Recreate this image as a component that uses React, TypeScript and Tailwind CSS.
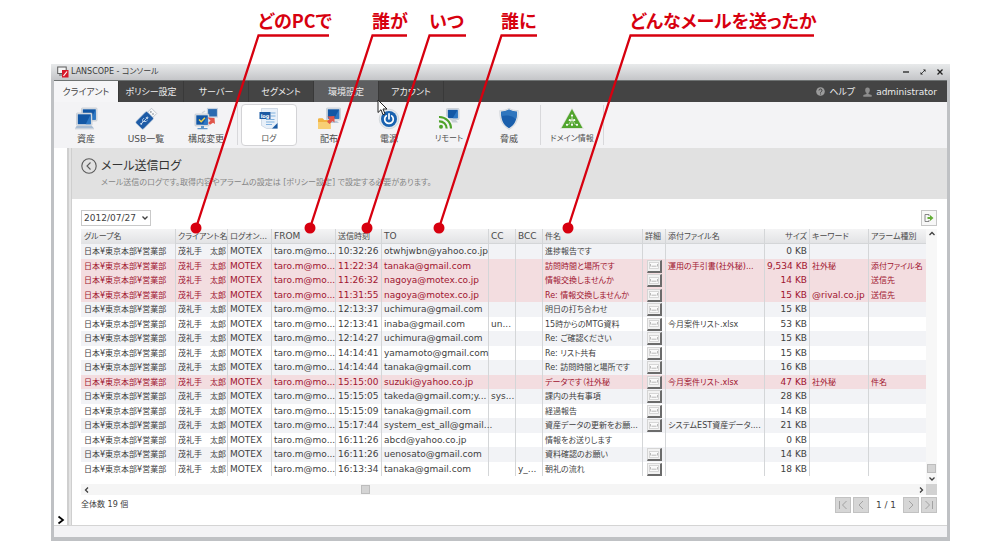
import React from "react";

type Row = {
  time: string;
  to: string;
  cc?: string;
  bcc?: string;
  subject: string;
  mail?: boolean;
  file?: string;
  size: string;
  keyword?: string;
  alarm?: string;
};

const rows: Row[] = [
  { time: "10:32:26", to: "otwhjwbn@yahoo.co.jp", subject: "進捗報告です", size: "0 KB" },
  { time: "11:22:34", to: "tanaka@gmail.com", subject: "訪問時間と場所です", mail: true, file: "運用の手引書(社外秘)...", size: "9,534 KB", keyword: "社外秘", alarm: "添付ファイル名" },
  { time: "11:26:32", to: "nagoya@motex.co.jp", subject: "情報交換しませんか", mail: true, size: "14 KB", alarm: "送信先" },
  { time: "11:31:55", to: "nagoya@motex.co.jp", subject: "Re: 情報交換しませんか", mail: true, size: "15 KB", keyword: "@rival.co.jp", alarm: "送信先" },
  { time: "12:13:37", to: "uchimura@gmail.com", subject: "明日の打ち合わせ", mail: true, size: "15 KB" },
  { time: "12:13:41", to: "inaba@gmail.com", cc: "un...", subject: "15時からのMTG資料", mail: true, file: "今月案件リスト.xlsx", size: "53 KB" },
  { time: "12:14:27", to: "uchimura@gmail.com", subject: "Re: ご確認ください", mail: true, size: "15 KB" },
  { time: "14:14:41", to: "yamamoto@gmail.com", subject: "Re: リスト共有", mail: true, size: "15 KB" },
  { time: "14:14:44", to: "tanaka@gmail.com", subject: "Re: 訪問時間と場所です", mail: true, size: "16 KB" },
  { time: "15:15:00", to: "suzuki@yahoo.co.jp", subject: "データです（社外秘", mail: true, file: "今月案件リスト.xlsx", size: "47 KB", keyword: "社外秘", alarm: "件名" },
  { time: "15:15:05", to: "takeda@gmail.com;y...", cc: "sys...", subject: "課内の共有事項", mail: true, size: "28 KB" },
  { time: "15:15:09", to: "tanaka@gmail.com", subject: "経過報告", mail: true, size: "14 KB" },
  { time: "15:17:44", to: "system_est_all@gmail...", subject: "資産データの更新をお願...", mail: true, file: "システムEST資産データ....", size: "21 KB" },
  { time: "16:11:26", to: "abcd@yahoo.co.jp", subject: "情報をお送りします", size: "0 KB" },
  { time: "16:11:26", to: "uenosato@gmail.com", subject: "資料確認のお願い", mail: true, size: "14 KB" },
  { time: "16:13:34", to: "tanaka@gmail.com", bcc: "y_...", subject: "朝礼の流れ", mail: true, size: "18 KB" },
];

const columns = [
  { label: "グループ名", col: "w-[94px]" },
  { label: "クライアント名", col: "w-[52px]" },
  { label: "ログオン...", col: "w-[44px]" },
  { label: "FROM", col: "w-[64px]" },
  { label: "送信時刻", col: "w-[46px]" },
  { label: "TO", col: "w-[107px]" },
  { label: "CC", col: "w-[27px]" },
  { label: "BCC", col: "w-[27px]" },
  { label: "件名", col: "w-[100px]" },
  { label: "詳細", col: "w-[23px]" },
  { label: "添付ファイル名", col: "w-[99px]" },
  { label: "サイズ", col: "w-[45px]" },
  { label: "キーワード", col: "w-[59px]" },
  { label: "アラーム種別", col: "" },
];

const tabs = ["クライアント", "ポリシー設定", "サーバー", "セグメント", "環境設定", "アカウント"];

const callouts = [
  { text: "どのPCで", x: 258, end: 329 },
  { text: "誰が", x: 372, end: 407 },
  { text: "いつ", x: 429, end: 466 },
  { text: "誰に", x: 501, end: 537 },
  { text: "どんなメールを送ったか", x: 630, end: 814 },
];

const hasKana = (s: string) => /[\u3040-\u30ff]/.test(s);
const isLatin = (s: string) => /^[\x20-\x7e]*$/.test(s);

function Monitor({ x, y, w, h }: { x: number; y: number; w: number; h: number }) {
  return (
    <g>
      <rect x={x} y={y} width={w} height={h} rx="0.8" fill="#dfe3e8" stroke="#b9c0c8" strokeWidth="0.6" />
      <rect x={x + 1.3} y={y + 1.3} width={w - 2.6} height={h - 2.6} fill="#1257a5" />
      <path d={`M${x + w - 1.3} ${y + 1.3}v${h - 2.6}l-5 0z`} fill="#2c77c4" />
    </g>
  );
}

const svgProps = { width: 24, height: 24, viewBox: "0 0 24 24", fill: "none", "aria-hidden": true } as const;

const AssetIcon = () => (
  <svg {...svgProps}>
    <Monitor x={7.5} y={1} w={15.5} h={13} />
    <Monitor x={2.5} y={6} w={15.5} h={12.5} />
    <path d="M2.500 19h15.500l2 2.500H1z" fill="#a9bdd4" />
    <path d="M1 21.500h19v0.800H1z" fill="#c9ced4" />
  </svg>
);

const UsbIcon = () => (
  <svg {...svgProps}>
    <g transform="rotate(-45 12 12)">
      <rect x="17.500" y="8.300" width="6" height="7.400" fill="#f6f7f8" stroke="#b4b9bf" strokeWidth="0.7" />
      <rect x="19.700" y="9.700" width="1.500" height="1.500" fill="#8f979f" />
      <rect x="19.700" y="12.700" width="1.500" height="1.500" fill="#8f979f" />
      <rect x="2" y="6.700" width="16" height="10.600" rx="1.500" fill="#1d5ba6" stroke="#cdd6e0" strokeWidth="0.6" />
      <path d="M5.500 12h8M12.800 10.900l2 1.100-2 1.100M7.500 12l1.800-2h2M8.500 12l1.800 1.900h1.500" stroke="#d5e3f3" strokeWidth="0.8" />
      <circle cx="5.300" cy="12" r="1" fill="#d5e3f3" />
    </g>
  </svg>
);

const ChangeIcon = () => (
  <svg {...svgProps}>
    <rect x="13.500" y="1.500" width="10" height="8.500" fill="#2a6ab0" stroke="#c7d2df" strokeWidth="1.200" />
    <path d="M11 4l-3 2M12 8l2 3" stroke="#cfd5db" strokeWidth="1.500" />
    <Monitor x={1} y={7} w={14} h={12} />
    <path d="M5 12.500l2.200 2.300 3.800-4" stroke="#f3d24b" strokeWidth="1.400" />
    <path d="M7 19h3v2H7zM3.500 21h10v1.200h-10z" fill="#5f96c9" />
    <path d="M13.500 10.500l7 .5.5 6-2-1.300-3 2-1.800-1.600 2.300-2.600z" fill="#e0554a" />
  </svg>
);

const LogIcon = () => (
  <svg {...svgProps}>
    <path d="M4.500 1.500h16v20H9.500l-5-3z" fill="#e8f0f9" stroke="#bac8d8" strokeWidth="0.600" />
    <path d="M13.500 6h5M13.500 9h5M9 12.500h8.500M9 15h8.500M9 17.500h6" stroke="#7fb0de" strokeWidth="1.200" />
    <rect x="2.500" y="5" width="11" height="7" fill="#1b5aa3" />
    <text x="8" y="10.500" textAnchor="middle" className="text-[5px] font-bold" fill="#ffffff">log</text>
    <path d="M15 21.500h5.500v-5.500z" fill="#1b5aa3" />
  </svg>
);

const DeployIcon = () => (
  <svg {...svgProps}>
    <Monitor x={9.5} y={1} w={14} h={12} />
    <path d="M14 14h6l2 2H12z" fill="#b9c9da" />
    <path d="M1 12.500q0-1.200 1.200-1.200h3.500l1.500 1.800h6.300v9H1z" fill="#f1b342" />
    <path d="M1 15h12.500v7H1z" fill="#f8cf74" />
    <path d="M10.500 9.500l7-.5v6.500l-2-1.500-3 3-2.500-2.300 2.500-2.700z" fill="#e0554a" />
  </svg>
);

const PowerIcon = () => (
  <svg {...svgProps}>
    <circle cx="12" cy="12" r="9.800" fill="#e4e8ec" stroke="#c6ccd2" strokeWidth="0.600" />
    <circle cx="12" cy="12" r="8" fill="#1962b0" />
    <path d="M9.300 8.800a4.300 4.300 0 1 0 5.400 0M12 6.800v5" stroke="#ffffff" strokeWidth="1.700" strokeLinecap="round" />
  </svg>
);

const RemoteIcon = () => (
  <svg {...svgProps}>
    <Monitor x={9.5} y={1.5} w={12.5} h={11} />
    <path d="M14 13h5l2 2.500h-6z" fill="#c9d0d7" />
    <path d="M2 9.500a12 12 0 0 1 12.500 12M2 14a7.500 7.500 0 0 1 8 7.500" stroke="#f3f3f5" strokeWidth="3.800" />
    <path d="M2 10a11.500 11.500 0 0 1 12 11.500M2 14.300a7.200 7.200 0 0 1 7.700 7.200" stroke="#4fa32a" strokeWidth="2.200" />
    <circle cx="4" cy="19.700" r="2" fill="#4fa32a" />
  </svg>
);

const ShieldIcon = () => (
  <svg {...svgProps}>
    <path d="M12 1.200c3 2 6 2.400 9.300 2.400 0 9-1.800 14.500-9.300 18.900C4.500 18.100 2.700 12.600 2.700 3.600 6 3.600 9 3.200 12 1.200z" fill="#e6e9ec" stroke="#c6cbd0" strokeWidth="0.600" />
    <path d="M12 2.600c2.700 1.600 5 2 8 2.100-.1 7.900-1.700 12.700-8 16.500C5.700 17.400 4.100 12.600 4 4.700 7 4.600 9.300 4.200 12 2.600z" fill="#1a5fac" />
    <path d="M12 2.600c2.700 1.600 5 2 8 2.100-.1 3-.4 5.500-1.200 7.700C15 8 9 8 4.400 9L4 4.700C7 4.600 9.300 4.200 12 2.600z" fill="#2f76be" />
  </svg>
);

const DomainIcon = () => (
  <svg {...svgProps}>
    <path d="M12 0.500l12 21.500H0z" fill="#dfe5dc" />
    <path d="M12 2l10.500 19H1.500z" fill="#51a52d" />
    <path d="M12 8.500v3M12 11.500l-3.500 6.500M12 11.500l3.500 6.500M12 11.500V18M8.700 13.500h6.600" stroke="#e9f4e3" strokeWidth="0.600" />
    <g fill="#ffffff">
      <circle cx="12" cy="8.500" r="1.100" /><circle cx="9.800" cy="13" r="1.100" /><circle cx="14.200" cy="13" r="1.100" />
      <circle cx="7" cy="17.800" r="1.100" /><circle cx="12" cy="17.800" r="1.100" /><circle cx="17" cy="17.800" r="1.100" />
    </g>
  </svg>
);

function Tool({ label, icon, active }: { label: string; icon: React.ReactNode; active?: boolean }) {
  return (
    <button
      type="button"
      className={
        "mx-0.5 flex h-[42px] w-14 flex-col items-center gap-0.5 whitespace-nowrap rounded-sm border pt-0.5 " +
        (active ? "border-[#d3d3d6] bg-white" : "border-transparent")
      }
    >
      {icon}
      <span className={"leading-[12px] text-[#4f4f4f] " + (hasKana(label) ? "text-[8px]" : "text-[9px]")}>{label}</span>
    </button>
  );
}

const Divider = () => <span className="mx-px h-[40px] w-px bg-[#d8d8db]" />;

function Chevron({ d, className }: { d: string; className?: string }) {
  return (
    <svg width="8" height="8" viewBox="0 0 8 8" fill="none" stroke="currentColor" strokeWidth="1.300" aria-hidden="true" className={className}>
      <path d={d} />
    </svg>
  );
}

function PageButton({ label, d }: { label: string; d: string }) {
  return (
    <button type="button" aria-label={label} className="flex size-4 items-center justify-center border border-[#c2c2c2] bg-[#d6d6d6] text-[#a2a2a2]">
      <svg width="12" height="12" viewBox="0 0 12 12" fill="none" stroke="currentColor" strokeWidth="1" aria-hidden="true">
        <path d={d} />
      </svg>
    </button>
  );
}

function MailButton() {
  return (
    <button type="button" aria-label="詳細" className="flex h-[13px] w-[15px] items-center justify-center border border-b-2 border-r-2 border-[#d5d5d5] border-b-[#6b6b6b] border-r-[#6b6b6b] bg-[#f2f2f2]">
      <svg width="10" height="7" viewBox="0 0 10 7" fill="none" stroke="#a9a9a9" strokeWidth="0.800" aria-hidden="true">
        <rect x="0.500" y="0.500" width="9" height="6" fill="#fafafa" stroke="#cfcfcf" />
        <path d="M1.500 2v2.500M8.500 2v2.500M2.500 4.200h5" />
      </svg>
    </button>
  );
}

function LogTable() {
  const base = "whitespace-nowrap border-l border-[#d4d6d8] p-0 pl-0.5 first:border-transparent ";
  const latin = base + "text-[9px] ";
  const jp = base + "text-[8px] ";
  return (
    <table className="w-full min-w-[845px] table-fixed border-separate border-spacing-0 text-left leading-[13px]">
      <colgroup>
        {columns.map((c) => (
          <col key={c.label} className={c.col} />
        ))}
      </colgroup>
      <thead>
        <tr className="h-[15px] bg-linear-to-b from-[#f4f4f5] to-[#e1e2e4] text-[#4a4a4a]">
          {columns.map((c) => (
            <th
              key={c.label}
              scope="col"
              className={(isLatin(c.label) ? latin : jp) + "border-b font-normal " + (c.label === "サイズ" ? "pr-0.5 text-right" : "")}
            >
              {c.label}
            </th>
          ))}
        </tr>
      </thead>
      <tbody>
        {rows.map((r, i) => (
          <tr
            key={i}
            className={
              "odd:h-[15px] even:h-[14px] " +
              (r.alarm ? "bg-[#f3dde0] text-[#a0142f]" : "text-[#3f3f3f] odd:bg-[#f2f3f6] even:bg-white")
            }
          >
            <td className={jp}>日本¥東京本部¥営業部</td>
            <td className={jp}>茂礼手　太郎</td>
            <td className={latin}>MOTEX</td>
            <td className={latin}>taro.m@mo...</td>
            <td className={latin}>{r.time}</td>
            <td className={latin}>{r.to}</td>
            <td className={latin}>{r.cc}</td>
            <td className={latin}>{r.bcc}</td>
            <td className={jp}>{r.subject}</td>
            <td className={jp + "pl-1"}>{r.mail && <MailButton />}</td>
            <td className={jp}>{r.file}</td>
            <td className={latin + "pr-0.5 text-right"}>{r.size}</td>
            <td className={isLatin(r.keyword ?? "") ? latin : jp}>{r.keyword}</td>
            <td className={jp}>{r.alarm}</td>
          </tr>
        ))}
      </tbody>
    </table>
  );
}

function Callouts() {
  return (
    <div className="pointer-events-none absolute left-0 top-0 text-[#d7000f]">
      <svg width="1000" height="240" viewBox="0 0 1000 240" fill="none" aria-hidden="true">
        {callouts.map((c) => (
          <g key={c.text}>
            <path d={`M${c.end} 35.500H${c.x + 0.5}L${c.x - 62} 228`} stroke="currentColor" strokeWidth="2.300" />
            <circle cx={c.x - 62} cy="228" r="5.500" fill="currentColor" />
          </g>
        ))}
      </svg>
      {callouts.map((c) => (
        <span key={c.text} className="absolute top-[7px] whitespace-nowrap text-[18px] font-bold leading-[26px] [font-family:'Noto_Sans_CJK_JP',sans-serif]" style={{ left: c.x }}>
          {c.text}
        </span>
      ))}
    </div>
  );
}

export default function App() {
  return (
    <div className="relative min-h-screen bg-white pl-[51px] pr-[50px] pt-16 [font-family:'DejaVu_Sans','Noto_Sans_CJK_JP',sans-serif] [font-feature-settings:'palt']">
      <div className="flex flex-col bg-[#bfc1c4]">
        <header className="flex h-4 items-center bg-linear-to-b from-[#e8eaeb] to-[#c4c5c8] px-1.5">
          <svg width="12" height="12" viewBox="0 0 12 12" fill="none" aria-hidden="true">
            <rect x="0.700" y="1" width="8.500" height="6.500" fill="#f4f4f4" stroke="#5a5a5a" strokeWidth="1" />
            <path d="M2 9h3" stroke="#5a5a5a" />
            <rect x="5" y="4" width="6.500" height="7.500" fill="#d7182a" />
            <path d="M6.500 10l3.500-4.500" stroke="#ffffff" strokeWidth="1.200" />
          </svg>
          <h1 className="ml-0.5 flex-1 text-[8px] leading-[14px] text-[#3c3c3c]">LANSCOPE - コンソール</h1>
          <div className="flex gap-[9px] text-[#222]">
            <button type="button" aria-label="最小化"><Chevron d="M1 4h6" /></button>
            <button type="button" aria-label="最大化">
              <svg width="8" height="8" viewBox="0 0 8 8" fill="currentColor" aria-hidden="true">
                <path d="M4 1.500h2.500V4zM1.500 4v2.500H4z" /><path d="M2 6l4-4" stroke="currentColor" strokeWidth="0.800" />
              </svg>
            </button>
            <button type="button" aria-label="閉じる"><Chevron d="M1.500 1.500l5 5M6.500 1.500l-5 5" /></button>
          </div>
        </header>

        <div className="mx-[3px] mb-1 flex flex-col">
          <nav className="flex h-[22px] items-stretch border-t border-[#6e7272] bg-[#444444] text-[9px] leading-[14px] text-[#ececec]">
            {tabs.map((t, i) => (
              <button
                key={t}
                type="button"
                className={
                  "w-[65px] whitespace-nowrap border-r border-[#393939] " +
                  (i === 0 ? "bg-[#f5f5f7] text-[#444]" : i === 4 ? "bg-[#5d5e60]" : "")
                }
              >
                {t}
              </button>
            ))}
            <div className="ml-auto flex items-center gap-2 pr-2.5">
              <a href="#help" className="flex items-center gap-1">
                <svg width="9" height="9" viewBox="0 0 9 9" fill="none" aria-hidden="true">
                  <circle cx="4.500" cy="4.500" r="4.300" fill="#9b9b9b" />
                  <path d="M3 3.500a1.500 1.500 0 1 1 2.200 1.300q-.7.300-.7 1M4.500 6.500v1" stroke="#444" strokeWidth="1" />
                </svg>
                ヘルプ
              </a>
              <a href="#account" className="flex items-center gap-1">
                <svg width="9" height="10" viewBox="0 0 9 10" fill="#8d8d8d" aria-hidden="true">
                  <rect x="2.200" y="0.500" width="4.600" height="5.500" rx="2.200" />
                  <path d="M3.500 5h2v2l3.200 1v1.800H.3V8l3.200-1z" />
                </svg>
                administrator
              </a>
            </div>
          </nav>

          <div className="flex h-[46px] items-center bg-[#f3f3f5] pl-0.5">
            <Tool label="資産" icon={<AssetIcon />} />
            <Tool label="USB一覧" icon={<UsbIcon />} />
            <Tool label="構成変更" icon={<ChangeIcon />} />
            <Divider />
            <Tool label="ログ" icon={<LogIcon />} active />
            <Tool label="配布" icon={<DeployIcon />} />
            <Tool label="電源" icon={<PowerIcon />} />
            <Tool label="リモート" icon={<RemoteIcon />} />
            <Tool label="脅威" icon={<ShieldIcon />} />
            <Divider />
            <Tool label="ドメイン情報" icon={<DomainIcon />} />
            <Divider />
          </div>

          <div className="flex">
            <aside className="flex w-[13px] items-end justify-center bg-white">
              <button type="button" aria-label="パネルを開く" className="text-black">
                <svg width="8" height="10" viewBox="0 0 8 10" fill="none" stroke="currentColor" strokeWidth="1.700" aria-hidden="true">
                  <path d="M1.500 1.500l4.500 3.500-4.500 3.500" />
                </svg>
              </button>
            </aside>
            <div className="w-[5px] border-l-2 border-r border-[#cfcfcf] bg-[#e4e4e4]" />
            <main className="min-w-0 flex-1 bg-white">
              <div className="flex h-[51px] flex-col bg-[#e1e1e1] pl-[9px] pt-2">
                <div className="flex items-center gap-1">
                  <button type="button" aria-label="戻る" className="text-[#5a5a5a]">
                    <svg width="16" height="16" viewBox="0 0 16 16" fill="none" stroke="currentColor" strokeWidth="1.100" aria-hidden="true">
                      <circle cx="8" cy="8" r="7.200" />
                      <path d="M9.500 4.500L6 8l3.500 3.500" />
                    </svg>
                  </button>
                  <h2 className="text-[12px] leading-[20px] text-[#333]">メール送信ログ</h2>
                </div>
                <p className="pl-5 text-[8px] leading-[14px] text-[#858585]">
                  メール送信のログです。取得内容やアラームの設定は [ポリシー設定] で設定する必要があります。
                </p>
              </div>

              <div className="pb-3 pl-[9px] pr-2.5 pt-[11px] text-[#3f3f3f]">
                <div className="flex items-center justify-between">
                  <div className="relative">
                    <select aria-label="日付" className="block h-4 w-[70px] appearance-none border border-[#c9c9c9] bg-white pl-0.5 text-[9px] leading-[14px]">
                      <option>2012/07/27</option>
                    </select>
                    <Chevron d="M1.500 2.500L4 5l2.500-2.500" className="pointer-events-none absolute right-0.5 top-1" />
                  </div>
                  <button type="button" aria-label="エクスポート" className="flex size-4 items-center justify-center border border-[#c6c6c6] bg-[#f7f7f7]">
                    <svg width="10" height="8" viewBox="0 0 10 8" fill="none" aria-hidden="true">
                      <path d="M5 2V.5H1v7h4V6" stroke="#7a7a7a" strokeWidth="0.900" />
                      <path d="M3.500 3H6V1l3.500 3L6 7V5H3.500z" fill="#62ad35" />
                    </svg>
                  </button>
                </div>

                <div className="mt-[3px] flex">
                  <div className="min-w-0 flex-1 pb-2">
                    <LogTable />
                  </div>
                  <div className="flex w-[11px] flex-col items-center bg-[#f7f7f7] py-px">
                    <Chevron d="M1.500 5L4 2.500 6.500 5" />
                    <div className="mt-auto size-[9px] border border-[#bdbdbd] bg-[#d4d4d4]" />
                    <Chevron d="M1.500 2.500L4 5l2.500-2.500" className="mt-0.5" />
                  </div>
                </div>
                <div className="flex h-[11px] items-center bg-[#f5f5f5]">
                  <Chevron d="M5 1.500L2.500 4 5 6.500" className="ml-0.5" />
                  <div className="ml-[270px] size-[9px] border border-[#bdbdbd] bg-[#d4d4d4]" />
                  <Chevron d="M3 1.500L5.500 4 3 6.500" className="ml-auto mr-px" />
                  <div className="size-[11px] bg-[#d2d2d2]" />
                </div>

                <div className="mt-0.5 flex h-4 items-center leading-[14px]">
                  <span className="flex-1 text-[8px]">全体数 19 個</span>
                  <div className="flex items-center gap-0.5 text-[9px]">
                    <PageButton label="最初のページ" d="M2.500 2v8M9.500 2L5.500 6l4 4" />
                    <PageButton label="前のページ" d="M8 2L4 6l4 4" />
                    <span className="w-[30px] text-center">1 / 1</span>
                    <PageButton label="次のページ" d="M4 2l4 4-4 4" />
                    <PageButton label="最後のページ" d="M2.500 2l4 4-4 4M9.500 2v8" />
                  </div>
                </div>
              </div>
            </main>
          </div>
          <footer className="h-3 border-t border-[#d4d4d4] bg-[#f3f3f5]" />
        </div>
      </div>

      <svg width="11" height="17" viewBox="0 0 11 17" aria-hidden="true" className="pointer-events-none absolute left-[377px] top-[99px]">
        <path d="M1 1v12.500l3-2.800 2 5 2-.9-2-4.800h4z" fill="#ffffff" stroke="#222222" strokeWidth="1" />
      </svg>
      <Callouts />
    </div>
  );
}
